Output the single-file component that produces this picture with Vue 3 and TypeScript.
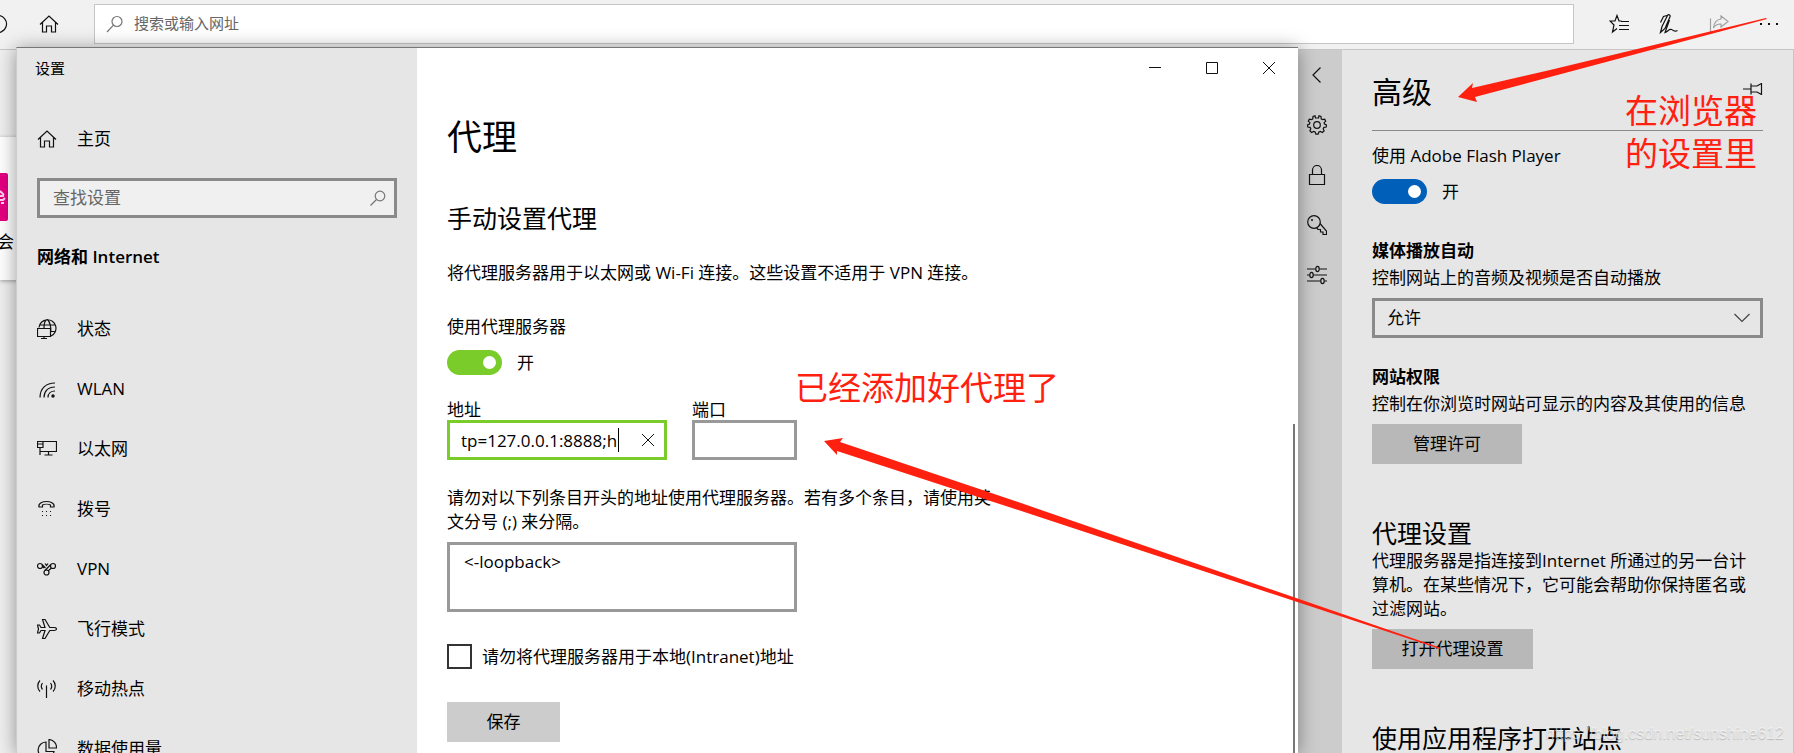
<script setup lang="ts">
import { ref } from 'vue'

interface NavItem {
  id: string
  label: string
}

const navItems: NavItem[] = [
  { id: 'status', label: '状态' },
  { id: 'wlan', label: 'WLAN' },
  { id: 'ethernet', label: '以太网' },
  { id: 'dialup', label: '拨号' },
  { id: 'vpn', label: 'VPN' },
  { id: 'airplane', label: '飞行模式' },
  { id: 'hotspot', label: '移动热点' },
  { id: 'usage', label: '数据使用量' },
]

const query = ref('')
const search = ref('')
const proxyOn = ref(true)
const flashOn = ref(true)
const address = ref('tp=127.0.0.1:8888;h')
const port = ref('')
const bypass = ref('<-loopback>')
const skipLocal = ref(false)
const autoplay = ref('允许')
</script>

<template>
  <div class="desktop">
    <section class="browser">
      <header class="toolbar">
        <div class="tools-left">
          <button class="tool refresh" aria-label="刷新">
            <svg width="20" height="20" viewBox="0 0 20 20"><path d="M10 1.5a8.5 8.5 0 1 1-6 2.5" /></svg>
          </button>
          <button class="tool" aria-label="主页">
            <svg width="20" height="20" viewBox="0 0 20 20"><path d="M1 10.5 10 2l9 8.500M3.500 8.500V18h4v-6h5v6h4V8.500" /></svg>
          </button>
        </div>
        <label class="address-bar">
          <svg width="18" height="18" viewBox="0 0 18 18"><circle cx="11" cy="6.500" r="5" /><path d="M7.500 10.200 1 17" /></svg>
          <input v-model="query" type="text" placeholder="搜索或输入网址" aria-label="搜索或输入网址" />
        </label>
        <div class="tools-right">
          <button class="tool" aria-label="收藏夹">
            <svg width="20" height="20" viewBox="0 0 20 20"><path d="M12.500 7H10L8 1.500 6 7H1l4 4-1.500 7L8 14.500M12 7.500h8M10 11.500h10M10 15.500h10" /></svg>
          </button>
          <button class="tool" aria-label="添加笔记">
            <svg width="20" height="20" viewBox="0 0 20 20"><path d="M1.500 18.500 3 12.500 8.500 1.500c.8-1.500 3.200-.5 2.500 1.200L6 14.500ZM1.500 8.500 4.500 2.500 8 1.500M10.500 6 6 18.500c3-1 4-4 6.500-3s3 3 6 1" /></svg>
          </button>
          <button class="tool faded" aria-label="共享">
            <svg width="20" height="20" viewBox="0 0 20 20"><path d="M1.500 4.500v13h9M12 2l7 5.500-7 5.500V10C8 10 6 11 4.500 14 5 9 7.500 5.500 12 5V2Z" /></svg>
          </button>
          <button class="tool" aria-label="设置及其他">
            <svg width="20" height="20" viewBox="0 0 20 20"><path class="solid" d="M1 9h2v2H1zM9 9h2v2H9zM17 9h2v2h-2z" /></svg>
          </button>
        </div>
      </header>

      <div class="browser-body">
        <main class="page">
          <article class="card">
            <div class="tile">
              <svg width="8" height="16" viewBox="0 0 8 16"><path d="M0 2l4 4M0 7h4M0 11h3l2-2M1 14h3" /></svg>
            </div>
            <span class="tile-name">会</span>
          </article>
        </main>

        <nav class="strip">
          <button aria-label="返回">
            <svg width="20" height="20" viewBox="0 0 20 20"><path d="M13.500 2.500 6 10l7.500 7.500" /></svg>
          </button>
          <button aria-label="常规">
            <svg width="20" height="20" viewBox="0 0 20 20">
              <circle cx="10" cy="10" r="3.300" />
              <path d="M8.500 3 8 .8 6 1.500l-.2 2.300-1.300.9-2.200-.5-1 1.900 1.600 1.600L2.500 9l-2 1 .3 2 2.300.4.7 1.400-.9 2.100 1.700 1.600 2-1.100 1.500.6.8 2.200h2.200l.8-2.200 1.500-.6 2 1.100 1.700-1.600-.9-2.100.7-1.400 2.300-.4.3-2-2-1-.4-1.300 1.600-1.600-1-1.900-2.200.5-1.300-.9L14 1.500 12 .8 11.500 3Z" />
            </svg>
          </button>
          <button aria-label="隐私和安全">
            <svg width="20" height="20" viewBox="0 0 20 20"><path d="M2.500 9.500h15v10h-15zM5.500 9.500V5a4.500 4.500 0 0 1 9 0v4.500" /></svg>
          </button>
          <button aria-label="密码和自动填充">
            <svg width="20" height="20" viewBox="0 0 20 20"><circle cx="7" cy="7" r="6.300" /><circle class="solid" cx="5" cy="5" r="1" /><path d="M13 8.500 19.500 16v3.500H16V17h-2.500v-2.500H11l-1.500-1.800" /></svg>
          </button>
          <button aria-label="高级">
            <svg width="20" height="20" viewBox="0 0 20 20"><path d="M0 4h8.500M12.500 4H20M0 10h2.500M6.500 10H20M0 16h13.500M17.500 16H20" /><ellipse cx="10.500" cy="4" rx="1.700" ry="2.700" /><ellipse cx="4.500" cy="10" rx="1.700" ry="2.700" /><ellipse cx="15.500" cy="16" rx="1.700" ry="2.700" /></svg>
          </button>
        </nav>

        <aside class="panel">
          <div class="panel-head">
            <h1>高级</h1>
            <button class="pin" aria-label="固定此窗格">
              <svg width="20" height="12" viewBox="0 0 20 12"><path d="M0 6h8M8 .5v11M8 3h6l4.500-2.500v11L14 9H8" /></svg>
            </button>
          </div>
          <label class="line" for="flash">使用 Adobe Flash Player</label>
          <div class="switch-row">
            <input id="flash" v-model="flashOn" class="switch blue" type="checkbox" role="switch" />
            <span>{{ flashOn ? '开' : '关' }}</span>
          </div>

          <h3>媒体播放自动</h3>
          <label class="line" for="autoplay">控制网站上的音频及视频是否自动播放</label>
          <div class="select">
            <select id="autoplay" v-model="autoplay">
              <option>允许</option>
              <option>限制</option>
              <option>阻止</option>
            </select>
            <svg width="16" height="10" viewBox="0 0 16 10"><path d="M.5 1 8 8.500 15.500 1" /></svg>
          </div>

          <h3 class="tight">网站权限</h3>
          <p class="line">控制在你浏览时网站可显示的内容及其使用的信息</p>
          <button class="action manage">管理许可</button>

          <h2>代理设置</h2>
          <p class="line">
            代理服务器是指连接到Internet 所通过的另一台计<br />算机。在某些情况下，它可能会帮助你保持匿名或<br />过滤网站。
          </p>
          <button class="action open">打开代理设置</button>

          <h2>使用应用程序打开站点</h2>
        </aside>
      </div>
    </section>

    <section class="window">
      <aside class="sidebar">
        <div class="title">设置</div>
        <a class="home" href="#">
          <svg width="20" height="20" viewBox="0 0 20 20"><path d="M1 10.500 10 2l9 8.500M3.500 8.500V18h4v-6h5v6h4V8.500" /></svg>
          <span>主页</span>
        </a>
        <label class="find">
          <input v-model="search" type="text" placeholder="查找设置" aria-label="查找设置" />
          <svg width="16" height="16" viewBox="0 0 16 16"><circle cx="10" cy="6" r="4.800" /><path d="M6.500 9.500.5 15.500" /></svg>
        </label>
        <h2>网络和 Internet</h2>
        <nav>
          <a v-for="item in navItems" :key="item.id" href="#">
            <svg width="20" height="20" viewBox="0 0 20 20">
              <template v-if="item.id === 'status'">
                <path d="M2 8.500a8.500 8.500 0 1 1 12 8.500M2.500 6h16M14 12.500h4.500M7 9C7 4 8.500 1 10.500.5 13 3 14.500 9 13.500 14M.5 9.500h13v8H.5zM7 17.500v2M4 19.500h6" />
              </template>
              <template v-else-if="item.id === 'wlan'">
                <path d="M3 18.500C3 9.500 9 4 18 4M7 18.500C7 12 11 8 18 8M11 18.500c0-4 3-6.500 7-6.500" /><circle class="solid" cx="16" cy="17" r="1.700" />
              </template>
              <template v-else-if="item.id === 'ethernet'">
                <path d="M6 2.500h13.500v10H3M.5 2.500H6v6H.5zM.5 5H6M3 8.500V16M11.500 12.500V16M7.500 16h8" />
              </template>
              <template v-else-if="item.id === 'dialup'">
                <path d="M2 8c-1-4 4-5.500 7.500-5.500S18 4 17 8h-3.500V6c-2-1-6-1-8 0v2Z" /><path class="solid" d="M5 12h1v1H5zM9 12h1v1H9zM13 12h1v1h-1zM5 16h1v1H5zM9 16h1v1H9zM13 16h1v1h-1z" />
              </template>
              <template v-else-if="item.id === 'vpn'">
                <circle cx="3" cy="7" r="2.500" /><circle cx="16" cy="7" r="2.500" /><circle cx="9.500" cy="13.500" r="2.500" /><path d="M5 5.500 8.500 9M13.800 5.500 8 11.500M5.500 7.500 7 9M14.500 9 11 12M8 4.500l1.500 2 1.500-2" />
              </template>
              <template v-else-if="item.id === 'airplane'">
                <path d="M.5 6h2l1.500 2.500h4L5.500.5H8l4.800 8H17c3.300 0 3.300 3 0 3h-4.200l-4.800 8H5.500l2.500-8H4L2.500 14h-2l1-4Z" />
              </template>
              <template v-else-if="item.id === 'hotspot'">
                <path d="M3 1.500c-3 3-3 8 0 11M16 1.500c3 3 3 8 0 11M5.500 4c-1.500 2-1.500 4.500 0 6.500M13.500 4c1.500 2 1.500 4.500 0 6.500M9.500 6.500V19" />
              </template>
              <template v-else>
                <path d="M9 3a8 8 0 1 0 8 9.500H9ZM12 .5V9h7.500A8 8 0 0 0 12 .5Z" />
              </template>
            </svg>
            <span>{{ item.label }}</span>
          </a>
        </nav>
      </aside>

      <div class="content">
        <div class="caption">
          <button aria-label="最小化"><svg width="12" height="12" viewBox="0 0 12 12"><path d="M0 5.500h12" /></svg></button>
          <button aria-label="最大化"><svg width="12" height="12" viewBox="0 0 12 12"><path d="M.5.5h11v11H.5z" /></svg></button>
          <button aria-label="关闭"><svg width="12" height="12" viewBox="0 0 12 12"><path d="m0 0 12 12M12 0 0 12" /></svg></button>
        </div>
        <form class="proxy" @submit.prevent>
          <h1>代理</h1>
          <h2>手动设置代理</h2>
          <p class="intro">将代理服务器用于以太网或 Wi-Fi 连接。这些设置不适用于 VPN 连接。</p>
          <label class="use-label" for="use-proxy">使用代理服务器</label>
          <div class="switch-row">
            <input id="use-proxy" v-model="proxyOn" class="switch green" type="checkbox" role="switch" />
            <span>{{ proxyOn ? '开' : '关' }}</span>
          </div>
          <div class="fields">
            <div class="field">
              <label for="address">地址</label>
              <div class="box focused">
                <input id="address" v-model="address" type="text" />
                <i class="caret"></i>
                <button type="button" aria-label="清除" @click="address = ''">
                  <svg width="12" height="12" viewBox="0 0 12 12"><path d="m0 0 12 12M12 0 0 12" /></svg>
                </button>
              </div>
            </div>
            <div class="field port">
              <label for="port">端口</label>
              <div class="box"><input id="port" v-model="port" type="text" /></div>
            </div>
          </div>
          <label class="bypass-label" for="bypass">请勿对以下列条目开头的地址使用代理服务器。若有多个条目，请使用英<br />文分号 (;) 来分隔。</label>
          <textarea id="bypass" v-model="bypass"></textarea>
          <label class="check">
            <input v-model="skipLocal" type="checkbox" />
            <span>请勿将代理服务器用于本地(Intranet)地址</span>
          </label>
          <button class="save" type="submit">保存</button>
        </form>
        <div class="scroll-thumb"></div>
      </div>
    </section>

    <div class="note note-done">已经添加好代理了</div>
    <div class="note note-where">在浏览器<br />的设置里</div>
    <svg class="arrows" width="1794" height="753" viewBox="0 0 1794 753">
      <polygon points="1458,97 1473,83 1472,88 1550,70 1766,18 1767,19 1550,77 1475,97 1477,102" />
      <polygon points="824,441 843,438 840,442 1015,501 1441,648 1440,649 1015,509 837,451 837,455" />
    </svg>
    <div class="watermark">https://blog.csdn.net/sunshine612</div>
  </div>
</template>

<style>
body {
  margin: 0;
}
</style>

<style scoped>
.desktop {
  position: relative;
  height: 100vh;
  overflow: hidden;
  background: #f1f1f1;
  color: #000;
  font: 17px/24px "Open Sans", "Noto Sans CJK SC", sans-serif;
}
.desktop * {
  box-sizing: border-box;
}
h1,
h2,
h3,
p {
  margin: 0;
  font-weight: 400;
}
button,
input,
select,
textarea {
  margin: 0;
  padding: 0;
  border: 0;
  border-radius: 0;
  outline: 0;
  background: transparent;
  color: inherit;
  font: inherit;
}
button {
  display: flex;
  align-items: center;
  justify-content: center;
}
a {
  color: inherit;
  text-decoration: none;
}
svg {
  flex: none;
  fill: none;
  stroke: #111;
  stroke-width: 1.2;
}
svg .solid {
  fill: #111;
  stroke: none;
}
.browser {
  display: flex;
  flex-direction: column;
  height: 100%;
}
.toolbar {
  display: flex;
  flex: none;
  height: 50px;
  padding-top: 4px;
  border-bottom: 1px solid #c6c6c6;
}
.tools-left {
  display: flex;
  width: 94px;
  overflow: hidden;
}
.tools-right {
  display: flex;
  margin-left: 20px;
}
.tool {
  flex: none;
  width: 50px;
  height: 40px;
}
.tools-left .tool {
  width: 48px;
}
.tools-left .refresh {
  justify-content: flex-end;
  width: 25px;
  margin-left: -16px;
  padding-right: 1px;
}
.tools-left .tool + .tool {
  margin-left: 16px;
}
.faded svg {
  stroke: #a0a0a0;
}
.address-bar {
  display: flex;
  flex: 1;
  align-items: center;
  height: 40px;
  padding-left: 11px;
  gap: 10px;
  border: 1px solid #c6c6c6;
  background: #fff;
}
.address-bar svg,
.find svg {
  stroke: #767676;
}
.address-bar input {
  flex: 1;
  height: 30px;
  padding-bottom: 2px;
  font-size: 15px;
}
input::placeholder {
  color: #666;
  opacity: 1;
}
.browser-body {
  display: flex;
  flex: 1;
  min-height: 0;
}
.page {
  flex: 1;
  padding-top: 87px;
  background: #efefef;
}
.card {
  height: 143px;
  padding-top: 36px;
  background: #fff;
  box-shadow: 0 1px 4px rgba(0, 0, 0, 0.35);
}
.tile {
  display: flex;
  align-items: center;
  width: 8px;
  height: 48px;
  border-radius: 0 2px 2px 0;
  background: #e3007f;
}
.tile svg {
  stroke: #ffd0ea;
  stroke-width: 2;
}
.tile-name {
  display: flex;
  justify-content: flex-end;
  width: 14px;
  margin-top: 9px;
}
.strip {
  width: 44px;
  padding-right: 6px;
  margin-left: -6px;
  border-left: 6px solid #ccc;
  box-sizing: content-box;
  background: #ccc;
}
.strip {
  width: 38px;
}
.strip button {
  width: 100%;
  height: 50px;
}
.panel {
  width: 452px;
  padding: 22px 30px 0;
  border-right: 1px solid #c6c6c6;
  background: #e6e6e6;
  white-space: nowrap;
}
.panel-head {
  display: flex;
  align-items: flex-start;
  justify-content: space-between;
  height: 59px;
  margin-bottom: 13px;
  border-bottom: 1px solid #8a8a8a;
}
.panel h1 {
  font-size: 30px;
  line-height: 40px;
}
.pin {
  height: 34px;
}
.line {
  display: block;
}
.switch-row {
  display: flex;
  align-items: center;
  gap: 15px;
  height: 25px;
  margin-top: 11px;
}
.switch {
  display: flex;
  align-items: center;
  justify-content: flex-end;
  width: 55px;
  height: 25px;
  padding-right: 6px;
  border-radius: 13px;
  appearance: none;
}
.switch::before {
  width: 13px;
  height: 13px;
  border-radius: 50%;
  background: #fff;
  content: "";
}
.switch:not(:checked) {
  justify-content: flex-start;
  padding-left: 6px;
}
.blue {
  background: #005fb8;
}
.green {
  background: #7acc2b;
}
.panel h3 {
  margin: 35px 0 3px;
  font-size: 17px;
  font-weight: 700;
}
.panel .tight {
  margin-top: 27px;
}
.select {
  display: flex;
  align-items: center;
  height: 40px;
  margin-top: 8px;
  border: 3px solid #8a8a8a;
}
.select select {
  flex: 1;
  height: 34px;
  padding-left: 12px;
  margin-right: -26px;
  appearance: none;
}
.select svg {
  margin-right: 10px;
  stroke: #444;
  pointer-events: none;
}
.action {
  height: 40px;
  margin-top: 8px;
  background: #b8b8b8;
}
.manage {
  width: 150px;
}
.open {
  width: 161px;
}
.panel h2 {
  margin-top: 53px;
  font-size: 25px;
  line-height: 32px;
}
.window {
  position: absolute;
  top: 47px;
  right: 496px;
  bottom: 0;
  left: 16px;
  display: flex;
  border-top: 1px solid #777;
  border-left: 1px solid #ccc;
  background: #fff;
  box-shadow: 0 2px 18px rgba(0, 0, 0, 0.4);
}
.sidebar {
  width: 400px;
  padding: 0 20px;
  overflow: hidden;
  background: #e6e6e6;
}
.title {
  margin-left: -2px;
  font-size: 15px;
  line-height: 40px;
}
.home {
  display: flex;
  align-items: center;
  gap: 20px;
  height: 40px;
  margin: 31px 0 19px;
}
.find {
  display: flex;
  align-items: center;
  height: 40px;
  padding: 0 8px 0 13px;
  border: 3px solid #8a8a8a;
  background: #f0f0f0;
}
.find input {
  flex: 1;
  min-width: 0;
}
.sidebar h2 {
  margin: 27px 0 30px;
  font-size: 17px;
  font-weight: 600;
}
.sidebar nav a {
  display: flex;
  align-items: center;
  gap: 20px;
  height: 60px;
}
.content {
  position: relative;
  flex: 1;
  min-width: 0;
}
.caption {
  display: flex;
  justify-content: flex-end;
  padding-right: 1px;
}
.caption button {
  width: 57px;
  height: 40px;
}
.caption svg,
.focused svg {
  stroke-width: 1;
}
.proxy {
  padding: 27px 30px 0;
}
.proxy h1 {
  font-size: 35px;
  line-height: 44px;
}
.proxy h2 {
  margin: 43px 0 27px;
  font-size: 25px;
  line-height: 32px;
}
.use-label {
  display: block;
  margin-top: 30px;
}
.fields {
  display: flex;
  gap: 25px;
  margin-top: 25px;
}
.field {
  width: 220px;
}
.port {
  width: 105px;
}
.field label {
  display: block;
  line-height: 20px;
}
.box {
  display: flex;
  align-items: center;
  height: 40px;
  border: 3px solid #999;
}
.box input {
  flex: 1;
  min-width: 0;
  height: 34px;
}
.focused {
  padding: 0 5px 0 11px;
  border-color: #7acc2b;
}
.focused input {
  flex: none;
  width: 157px;
}
.caret {
  width: 1px;
  height: 24px;
  background: #000;
}
.focused button {
  flex: 1;
  height: 34px;
  padding-left: 18px;
}
.bypass-label {
  display: block;
  margin: 26px 0 8px;
}
textarea {
  display: block;
  width: 350px;
  height: 70px;
  padding: 5px 14px;
  border: 3px solid #999;
  resize: none;
}
.check {
  display: flex;
  align-items: center;
  gap: 10px;
  height: 25px;
  margin-top: 32px;
}
.check input {
  width: 25px;
  height: 25px;
  border: 2px solid #333;
  appearance: none;
}
.save {
  width: 113px;
  height: 40px;
  margin-top: 33px;
  background: #ccc;
}
.scroll-thumb {
  position: absolute;
  top: 376px;
  right: 3px;
  bottom: 0;
  width: 2px;
  background: #777;
}
.note {
  position: absolute;
  color: #ff2010;
  font-size: 33px;
  line-height: 43px;
  white-space: nowrap;
}
.note-done {
  top: 366px;
  left: 795px;
}
.note-where {
  top: 89px;
  right: 37px;
}
.arrows {
  position: absolute;
  top: 0;
  right: 0;
  fill: #ff2010;
  stroke: none;
  pointer-events: none;
}
.watermark {
  position: absolute;
  right: 10px;
  bottom: 7px;
  color: rgba(255, 255, 255, 0.6);
  font: 16px/24px "Liberation Sans", sans-serif;
  text-shadow: 0 1px 1px rgba(0, 0, 0, 0.2);
}
</style>
